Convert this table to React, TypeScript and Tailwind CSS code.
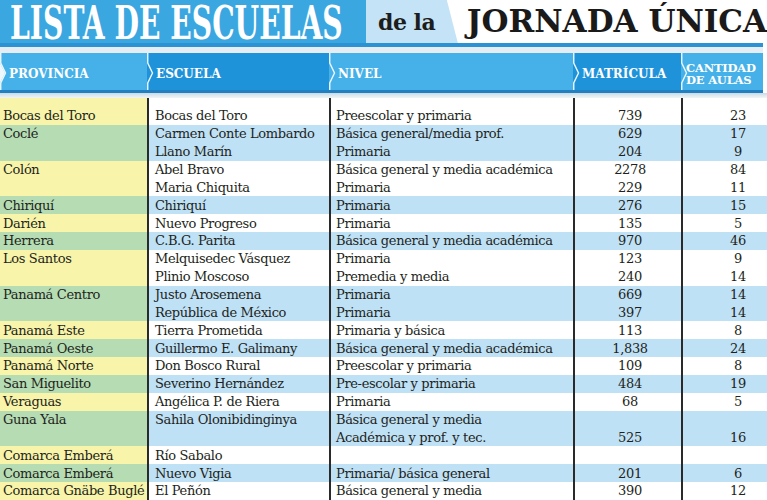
import React from 'react';

type Row = { p: string; pc: 'y' | 'g'; b: 'w' | 'b'; e: string; n: string; m: string; a: string };

const rows: Row[] = [
  { p: 'Bocas del Toro', pc: 'y', b: 'w', e: 'Bocas del Toro', n: 'Preescolar y primaria', m: '739', a: '23' },
  { p: 'Coclé', pc: 'g', b: 'b', e: 'Carmen Conte Lombardo', n: 'Básica general/media prof.', m: '629', a: '17' },
  { p: '', pc: 'g', b: 'b', e: 'Llano Marín', n: 'Primaria', m: '204', a: '9' },
  { p: 'Colón', pc: 'y', b: 'w', e: 'Abel Bravo', n: 'Básica general y media académica', m: '2278', a: '84' },
  { p: '', pc: 'y', b: 'w', e: 'Maria Chiquita', n: 'Primaria', m: '229', a: '11' },
  { p: 'Chiriquí', pc: 'g', b: 'b', e: 'Chiriquí', n: 'Primaria', m: '276', a: '15' },
  { p: 'Darién', pc: 'y', b: 'w', e: 'Nuevo Progreso', n: 'Primaria', m: '135', a: '5' },
  { p: 'Herrera', pc: 'g', b: 'b', e: 'C.B.G. Parita', n: 'Básica general y media académica', m: '970', a: '46' },
  { p: 'Los Santos', pc: 'y', b: 'w', e: 'Melquisedec Vásquez', n: 'Primaria', m: '123', a: '9' },
  { p: '', pc: 'y', b: 'w', e: 'Plinio Moscoso', n: 'Premedia y media', m: '240', a: '14' },
  { p: 'Panamá Centro', pc: 'g', b: 'b', e: 'Justo Arosemena', n: 'Primaria', m: '669', a: '14' },
  { p: '', pc: 'g', b: 'b', e: 'República de México', n: 'Primaria', m: '397', a: '14' },
  { p: 'Panamá Este', pc: 'y', b: 'w', e: 'Tierra Prometida', n: 'Primaria y básica', m: '113', a: '8' },
  { p: 'Panamá Oeste', pc: 'g', b: 'b', e: 'Guillermo E. Galimany', n: 'Básica general y media académica', m: '1,838', a: '24' },
  { p: 'Panamá Norte', pc: 'y', b: 'w', e: 'Don Bosco Rural', n: 'Preescolar y primaria', m: '109', a: '8' },
  { p: 'San Miguelito', pc: 'g', b: 'b', e: 'Severino Hernández', n: 'Pre-escolar y primaria', m: '484', a: '19' },
  { p: 'Veraguas', pc: 'y', b: 'w', e: 'Angélica P. de Riera', n: 'Primaria', m: '68', a: '5' },
  { p: 'Guna Yala', pc: 'g', b: 'b', e: 'Sahila Olonibidinginya', n: 'Básica general y media', m: '', a: '' },
  { p: '', pc: 'g', b: 'b', e: '', n: 'Académica y prof. y tec.', m: '525', a: '16' },
  { p: 'Comarca Emberá', pc: 'y', b: 'w', e: 'Río Sabalo', n: '', m: '', a: '' },
  { p: 'Comarca Emberá', pc: 'g', b: 'b', e: 'Nuevo Vigia', n: 'Primaria/ básica general', m: '201', a: '6' },
  { p: 'Comarca Gnäbe Buglé', pc: 'y', b: 'w', e: 'El Peñón', n: 'Básica general y media', m: '390', a: '12' },
];

const provBg = { y: 'bg-[#f8f4a9]', g: 'bg-[#b5dcb2]' };
const rowBg = { w: 'bg-white', b: 'bg-[#bfe1f6]' };

// white chevron edge at the left of each header cell
function Chevron({ first }: { first?: boolean }) {
  return (
    <svg className="absolute left-0 top-0 h-full w-[8px]" viewBox="0 0 8 37" preserveAspectRatio="none">
      {first && <polygon points="0,10 5,20 0,30" fill="#eef7fc" />}
      <polyline points="0.75,0 0.75,10 5.5,20 0.75,30 0.75,37" fill="none" stroke="#eef7fc" strokeWidth="1.4" />
    </svg>
  );
}

function HeadCell({ label, dark, first }: { label: string; dark?: boolean; first?: boolean }) {
  return (
    <div className={`relative flex items-center pl-[9px] pt-[5px] ${dark ? 'bg-[#1f93da]' : 'bg-[#46b0e8]'}`}>
      <Chevron first={first} />
      <span className="text-[12px] leading-[12px] font-bold text-white">{label}</span>
    </div>
  );
}

const cols = 'grid grid-cols-[147px_182px_244px_108px_1fr]';
const sep = 'border-l-2 border-[#2a2a2a]';

export default function App() {
  return (
    <div className="w-[767px] h-[500px] overflow-hidden bg-white font-['DejaVu_Serif',serif] text-[#231f20]">
      {/* title band */}
      <div className="flex h-[43px]">
        <div className="w-[366px] bg-[#3aa7e1] flex items-center pl-[10px] pt-[2px]">
          <span className="inline-block whitespace-nowrap origin-left scale-x-[0.613] text-[46px] font-bold leading-none text-white">
            LISTA DE ESCUELAS
          </span>
        </div>
        <div className="w-[92px] bg-[#c4e3f6] [clip-path:polygon(0_0,88%_0,100%_100%,0_100%)] flex items-center pl-[12px]">
          <span className="text-[22px] font-bold leading-none text-[#1d1d1b] tracking-[-0.5px]">de la</span>
        </div>
        <div className="flex-1 flex items-center pl-[9px]">
          <span className="text-[31px] font-bold leading-none text-[#1a1a1a] whitespace-nowrap">JORNADA ÚNICA</span>
        </div>
      </div>
      <div className="mr-[4px] h-[4px] bg-[#2b93d3]" />
      <div className="mr-[4px] h-[6px] bg-[#e6eef3]" />

      {/* column header */}
      <div className={`${cols} h-[37px] mr-[4px]`}>
        <HeadCell label="PROVINCIA" first />
        <HeadCell label="ESCUELA" dark />
        <HeadCell label="NIVEL" />
        <HeadCell label="MATRÍCULA" dark />
        <div className="relative flex flex-col justify-center pl-[5px] pt-[5px] bg-[#46b0e8] text-[11.5px] leading-[12.5px] font-bold text-white tracking-[-0.2px]">
          <Chevron />
          <span>CANTIDAD</span>
          <span>DE AULAS</span>
        </div>
      </div>
      <div className="mr-[4px] h-[3px] bg-[#2380c0]" />
      <div className="h-[5px] bg-gradient-to-b from-[#c9dbe6] to-[#f1f5f7]" />

      {/* table body */}
      <div className="text-[13px] tracking-[-0.35px] leading-none">
        <div className={`${cols} h-[9px]`}>
          <div className="bg-[#f8f4a9]" />
          <div className={sep} />
          <div className={sep} />
          <div className={sep} />
          <div className={sep} />
        </div>
        {rows.map((r, i) => (
          <div key={i} className={`${cols} h-[17.86px]`}>
            <div className={`${provBg[r.pc]} flex items-center pl-[3px] whitespace-nowrap`}>{r.p}</div>
            <div className={`${rowBg[r.b]} ${sep} flex items-center pl-[6px] whitespace-nowrap`}>{r.e}</div>
            <div className={`${rowBg[r.b]} ${sep} flex items-center pl-[5px] whitespace-nowrap`}>{r.n}</div>
            <div className={`${rowBg[r.b]} ${sep} flex items-center justify-center pl-[4px]`}>{r.m}</div>
            <div className={`${rowBg[r.b]} ${sep} flex items-center justify-center pl-[26px]`}>{r.a}</div>
          </div>
        ))}
      </div>
    </div>
  );
}
